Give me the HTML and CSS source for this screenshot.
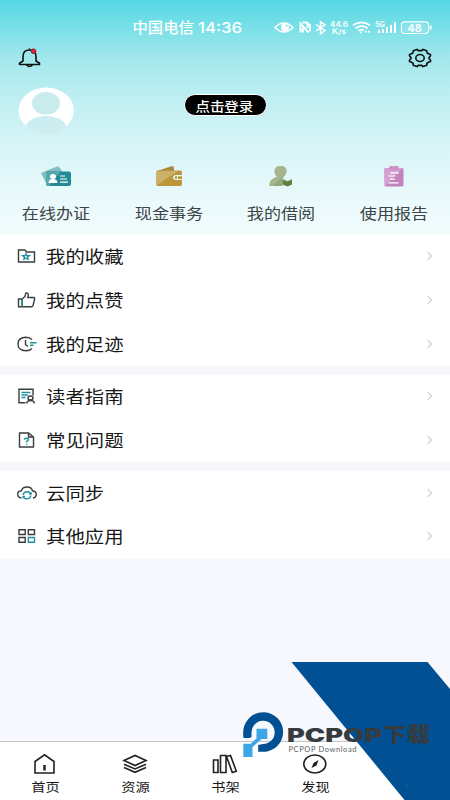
FILE: index.html
```html
<!DOCTYPE html>
<html lang="zh-CN">
<head>
<meta charset="utf-8">
<title>我的</title>
<link rel="stylesheet" href="styles.css">
</head>
<body>
<div class="app">
  <header class="hero">
    <div class="status">
      <svg width="450" height="36" viewBox="0 0 450 36" fill="#fff">
        <text x="132.500" y="33" class="st" font-size="14.500" textLength="61.500" lengthAdjust="spacingAndGlyphs">中国电信</text>
        <text x="198" y="33" class="num clock" font-size="15" textLength="44" lengthAdjust="spacingAndGlyphs">14:36</text>
        <path d="M275 27.500Q284 18.500 293 27.500Q284 36.500 275 27.500Z" fill="none" stroke="#fff" stroke-width="1.600"/>
        <circle cx="285" cy="27.300" r="4"/><circle cx="286.500" cy="25.800" r="1" fill="#6fdde6"/>
        <path d="M300.500 32.500V23.500L308.500 32.500M302.500 22.500H307L310 25.500V31.500M302.800 28V32.500M307.500 23V28" fill="none" stroke="#fff" stroke-width="1.900"/>
        <path d="M316 24.500l9 6-4.500 3.200V21.800l4.500 3-9 6" fill="none" stroke="#fff" stroke-width="1.500"/>
        <text x="330" y="26.800" class="num" font-size="7" textLength="18" lengthAdjust="spacingAndGlyphs">44.6</text>
        <text x="332" y="34" class="num" font-size="7" textLength="14" lengthAdjust="spacingAndGlyphs">K/s</text>
        <path d="M353 25.200q8.500-5.500 17 0M355.500 28.200q6-4.200 12 0M358.500 30.800q3-2 5.500-.2" fill="none" stroke="#fff" stroke-width="1.700"/>
        <circle cx="361" cy="32.500" r="1.100"/><circle cx="366" cy="31.800" r="1"/><circle cx="369" cy="31.800" r="1"/>
        <text x="375" y="27" class="num" font-size="7" textLength="10" lengthAdjust="spacingAndGlyphs">5G</text>
        <path d="M378 30h2v3h-2zM382 29h2v4h-2zM386 27h2v6h-2zM390 25h2v8h-2zM394 22h2v11h-2z"/>
        <rect x="401.500" y="21.800" width="27" height="11.700" rx="3.500" fill="none" stroke="#fff" stroke-width="1.200"/>
        <rect x="403.500" y="23.500" width="23" height="8.500" rx="2" opacity=".15"/>
        <path d="M430 25.500h1.500v4H430z"/>
        <text x="407.500" y="31.800" class="num" font-size="11" textLength="14" lengthAdjust="spacingAndGlyphs">48</text>
      </svg>
    </div>
    <div class="tools">
      <svg width="24" height="22" viewBox="0 0 24 22" fill="none" stroke="#111" stroke-width="1.600" stroke-linejoin="round">
        <path d="M11.500 1.500v1.500M5 14V9.500Q5 3 11.500 3Q18 3 18 9.500V14L21.500 16.200V17.500H1.500V16.200L5 14ZM8.500 18q3 3 6 0"/>
        <circle cx="15.500" cy="4.200" r="2.300" fill="#ef1c32" stroke="#73222e" stroke-width="1"/>
      </svg>
      <svg width="24" height="20" viewBox="-12 -10 24 20" fill="none" stroke="#111" stroke-width="1.600" stroke-linejoin="round">
        <path d="M-3-8.600L-1.800-7.400H1.800L3-8.600L6.800-7.200L6.900-5.200L8.500-4.200L10.500-3.500V-2.200L8.800 0L10.500 2.200V3.500L8.500 4.200L6.900 5.200L6.800 7.200L3 8.600L1.800 7.400H-1.800L-3 8.600L-6.800 7.200L-6.900 5.200L-8.500 4.200L-10.500 3.500V2.200L-8.800 0L-10.500-2.200V-3.500L-8.500-4.200L-6.900-5.200L-6.800-7.200Z"/>
        <ellipse rx="4.200" ry="3.500"/>
      </svg>
    </div>
    <div class="profile">
      <svg width="56" height="47" viewBox="0 0 56 47">
        <defs><clipPath id="face"><ellipse cx="28.200" cy="23.500" rx="28" ry="23.500"/></clipPath></defs>
        <ellipse cx="28.200" cy="23.500" rx="27.700" ry="23" fill="#fff"/>
        <g clip-path="url(#face)" fill="#c8ebee"><ellipse cx="28" cy="16.300" rx="14" ry="11.300"/><ellipse cx="28" cy="41" rx="20.500" ry="12" fill="#cdeef1"/></g>
      </svg>
      <button class="login"><span class="wide">点击登录</span></button>
    </div>
    <nav class="quick">
      <a><svg width="32" height="24" viewBox="0 0 32 24">
        <path d="M1 8L17 1.500Q19 1 20 3L23 8V20H7Z" fill="#80bfc2"/>
        <rect x="6" y="6.500" width="25" height="14.500" rx="2" fill="#218a95"/><path d="M8 6.500h13L9 21H8q-2 0-2-2V8.500q0-2 2-2Z" fill="#57a8ae"/>
        <ellipse cx="13" cy="11.500" rx="3" ry="2.500" fill="#fff"/><path d="M8.500 18q0-4 4.500-4t4.500 4ZM20 10.500h5v1h-5zM20 13.500h7v1h-7zM20 16.500h8v1.200h-8z" fill="#fff"/>
      </svg><span class="wide">在线办证</span></a>
      <a><svg width="32" height="24" viewBox="0 0 32 24">
        <path d="M4 6L19 1Q21 1 21 3V6Z" fill="#ad8c3e"/><rect x="3" y="5.500" width="26" height="15.500" rx="2" fill="#bd963c"/><path d="M5 6H25L4 20Q3 20 3 19V8Q3 6 5 6Z" fill="#cdb16b"/>
        <path d="M29.500 10H23q-3 0-3 2.500t3 2.500h6.500Z" fill="#e9f7f3"/><path d="M29 11.300H25V14h4Z" fill="#bd963c"/><circle cx="23" cy="12.500" r="1.300" fill="#ad8c3e"/>
      </svg><span class="wide">现金事务</span></a>
      <a><svg width="32" height="24" viewBox="0 0 32 24">
        <path d="M4.500 21Q4.500 14.500 10 13L12 11.500Q9.500 9.500 9.500 6.500Q10 1 15.500 1T21.500 6.500Q21.500 9.500 18.500 11.700V13L17.500 14V21Z" fill="#91a67a"/><path d="M15.500 1Q21.500 1 21.500 6.500Q21 10 16 13.500L8 21H4.500Q4.500 14.500 10 13L12 11.500Q9.500 9.500 9.500 6.500Q10 1 15.500 1Z" fill="#a6b68c"/>
        <path d="M17.500 14l5 2 4.500-2v5.500l-4.500 2-5-2Z" fill="#607d42"/><path d="M17.500 14l5 2 4.500-2" fill="none" stroke="#c7d3b8" stroke-width="1"/>
      </svg><span class="wide">我的借阅</span></a>
      <a><svg width="32" height="24" viewBox="0 0 32 24">
        <rect x="6.500" y="3" width="19" height="18.500" rx="1.500" fill="#c282bc"/><path d="M6.500 3h18L7 21Z" fill="#d4a0cf"/><rect x="11" y="1" width="10" height="4.500" rx="2" fill="#ce92c8"/>
        <path d="M12 7.800h9M10.500 11h7M12 14.200h5M10.500 17.800h10" stroke="#fff" stroke-width="1.200"/>
      </svg><span class="wide">使用报告</span></a>
    </nav>
  </header>

  <section class="group">
    <a class="row"><svg class="ico" viewBox="0 0 20 16"><path d="M1.500 14V2H8L9.500 4H17.500V14Z"/><path class="teal" d="M9 5.700l.9 1.900 2.400.1-1.800 1.400.6 2.100L9 10.200l-2.100 1 .6-2.100-1.800-1.400 2.400-.1Z"/></svg><span class="wide">我的收藏</span><i class="chev"></i></a>
    <a class="row"><svg class="ico" viewBox="0 0 20 16"><path d="M1.500 7H5V14.800H1.500ZM5 7.200L8 4.500L8.700 1.200Q11.200.3 11.300 3L10.800 5.500H17Q18 6 17.500 7.500L16 13.500Q15.500 14.800 14.500 14.800H5"/><path class="teal" d="M5 7.500V14.500"/></svg><span class="wide">我的点赞</span><i class="chev"></i></a>
    <a class="row"><svg class="ico" viewBox="0 0 20 16"><path d="M15 3.500Q12.700 1.200 9 1.200Q1 1.500 1 8T9 14.800Q12.700 14.800 15 12.500M8.500 4V8.500L11 10.500"/><path class="teal" d="M13 6.700h6.500M13 9.300h3.500"/></svg><span class="wide">我的足迹</span><i class="chev"></i></a>
  </section>
  <section class="group">
    <a class="row"><svg class="ico" viewBox="0 0 20 16"><path d="M8.500 14.700H2V1.200H16V7.500"/><path class="teal" d="M4.500 4.500h9M4.500 7h6.500M4.500 9.500h4"/><ellipse cx="13.500" cy="10" rx="2.500" ry="2"/><path d="M9.800 15.500q0-3 3.700-3t3.800 3"/></svg><span class="wide">读者指南</span><i class="chev"></i></a>
    <a class="row"><svg class="ico" viewBox="0 0 20 16"><path d="M2.500 1H11.500L16.500 5V15H2.500ZM11.500 1V5H16.500"/><path class="teal" d="M7.500 7.700q0-1.500 2-1.500t2 1.500q0 1-2 1.800v1M9.500 11.800v1"/></svg><span class="wide">常见问题</span><i class="chev"></i></a>
  </section>
  <section class="group">
    <a class="row"><svg class="ico" viewBox="0 0 20 16"><path d="M4.500 13Q.7 12.500.7 9.300T4.300 5.800Q5.500 2 10 2T15.500 5.800Q19.300 6.500 19.300 9.500T16 13"/><path class="teal" d="M6.300 10Q6.500 6.800 10 6.800T13.700 9.200M13.700 10.500Q13.500 13.700 10 13.700T6.300 11.500M12.200 9h2V7.500M8 11.500H6V13"/></svg><span class="wide">云同步</span><i class="chev"></i></a>
    <a class="row"><svg class="ico" viewBox="0 0 20 16"><path d="M2 1.800H8.200V6.500H2ZM11.300 1.800H17.500V6.500H11.300ZM2 9.500H8.200V14.200H2Z"/><path class="teal" d="M11.300 9.500H17.500V14.200H11.300Z"/></svg><span class="wide">其他应用</span><i class="chev"></i></a>
  </section>

  <nav class="tabs">
    <a><svg width="26" height="22" viewBox="0 0 26 22"><path d="M3 8.500L12.500 1.800L22 8.500V20H3Z"/><path d="M12.500 12v5.500" stroke-width="2.500"/></svg><span class="wide">首页</span></a>
    <a><svg width="26" height="22" viewBox="0 0 26 22"><path d="M2 7.500L13 2.500L24 7.500L13 12.500ZM2 11.200L13 16L24 11.200M2 14.500L13 19.300L24 14.500"/></svg><span class="wide">资源</span></a>
    <a><svg width="26" height="22" viewBox="0 0 26 22"><path d="M1.500 7H6V19.500H1.500ZM8.500 2.500H14V19.500H8.500ZM14.500 3.500L18.500 2.500L24.300 18.200L20.300 19.500Z"/></svg><span class="wide">书架</span></a>
    <a><svg width="26" height="22" viewBox="0 0 26 22"><ellipse cx="12.800" cy="11" rx="11" ry="9"/><path d="M16.500 7L14.500 12.500L9.500 15L11.500 10Z" fill="#222" stroke="none"/></svg><span class="wide">发现</span></a>
    <a></a>
  </nav>

  <div class="watermark">
    <svg width="210" height="138" viewBox="240 662 210 138">
      <path d="M291.500 662H427.500L450 689V800H404.500Z" fill="#005093"/>
      <path d="M243.500 738Q242 728 246.500 721.500A19.800 19.800 0 1 1 263 751.800H258.200V745L263 744A11.600 11.600 0 1 0 251.500 733V737L249.500 738Z" fill="#005093"/>
      <path d="M256.500 728.700H267.300V739H261.500L252.500 747V757H243.300V743.800H250.500L256.500 738.500Z" fill="#3da7e5"/>
      <path d="M406.500 787l.8-2" stroke="#167c8e"/>
      <text class="brand" x="287" y="741.500" font-size="18.500" textLength="95" lengthAdjust="spacingAndGlyphs">PCPOP</text>
      <text class="brand-cn" x="383" y="742" font-size="20" textLength="47" lengthAdjust="spacingAndGlyphs">下载</text>
      <text class="sub" x="288.500" y="752" font-size="7.500" textLength="68" lengthAdjust="spacing">PCPOP Download</text>
    </svg>
  </div>
</div>
</body>
</html>
```

FILE: styles.css
```css
* { box-sizing: border-box; }
body {
  margin: 0;
  font-family: "Noto Sans CJK SC", sans-serif;
  color: #171717;
}
svg { display: block; flex: none; }
.app {
  position: relative;
  width: 450px;
  height: 800px;
  overflow: hidden;
  display: flex;
  flex-direction: column;
  background: #f6f8fd;
}
.wide {
  display: inline-block;
  white-space: nowrap;
  transform: scaleX(1.14);
}
.hero {
  height: 235px;
  flex: none;
  background: linear-gradient(#54d8e4 0, #76dfe7 25px, #a4e8ec 60px, #c0eff2 100px, #d9f5f7 150px, #e9f9fb 195px, #f2fcfd 235px);
}
.status { height: 36px; }
.st { font-weight: 500; }
.num { font-family: Inter, sans-serif; font-weight: 600; }
.clock { font-weight: 500; }
.tools {
  height: 44px;
  padding: 0 18px;
  display: flex;
  justify-content: space-between;
  align-items: center;
}
.profile {
  height: 61px;
  padding-left: 18px;
  display: flex;
  align-items: center;
}
.profile .login { margin: -11px 0 0 110px; }
.login {
  width: 83px;
  height: 22px;
  padding: 0 2px 0 0;
  border: 1px solid #fff;
  border-radius: 11px;
  background: #000;
  color: #fff;
  font: 500 12.7px/19px "Noto Sans CJK SC", sans-serif;
}
.quick {
  padding-top: 24px;
  display: grid;
  grid-template-columns: repeat(4, 1fr);
}
.quick a {
  display: flex;
  flex-direction: column;
  align-items: center;
  gap: 13px;
  font-size: 15px;
  line-height: 22px;
  color: #3c4547;
}
.group {
  flex: none;
  margin-bottom: 9px;
  background: #fff;
}
.row {
  height: 43.7px;
  padding: 0 19px 1px 17px;
  display: flex;
  align-items: center;
  font-size: 17px;
  line-height: 24px;
}
.row .wide {
  margin-left: 8.5px;
  transform-origin: left;
}
.ico { width: 20px; height: 16px; }
.ico, .tabs svg {
  fill: none;
  stroke: #393d3e;
  stroke-width: 1.4;
}
.ico .teal { stroke: #20929e; }
.chev {
  width: 6px;
  height: 6px;
  margin-left: auto;
  border: solid #ccc;
  border-width: 1px 1px 0 0;
  transform: rotate(45deg);
}
.tabs {
  height: 59px;
  flex: none;
  margin-top: auto;
  padding: 11px 0 0 1px;
  border-top: 1px solid #c4c6c8;
  background: #fff;
  display: grid;
  grid-template-columns: repeat(5, 90px);
}
.tabs a {
  display: flex;
  flex-direction: column;
  align-items: center;
  gap: 3px;
  font-size: 12.5px;
  line-height: 18px;
}
.tabs svg { stroke: #222; stroke-width: 1.6; margin-left: -2px; }
.watermark {
  position: absolute;
  right: 0;
  bottom: 0;
}
.brand { font-family: Inter, sans-serif; font-weight: 900; fill: #363b40; }
.brand-cn { font-weight: 900; fill: #363b40; }
.sub { font-family: Lato, sans-serif; fill: #5d6267; }
```
